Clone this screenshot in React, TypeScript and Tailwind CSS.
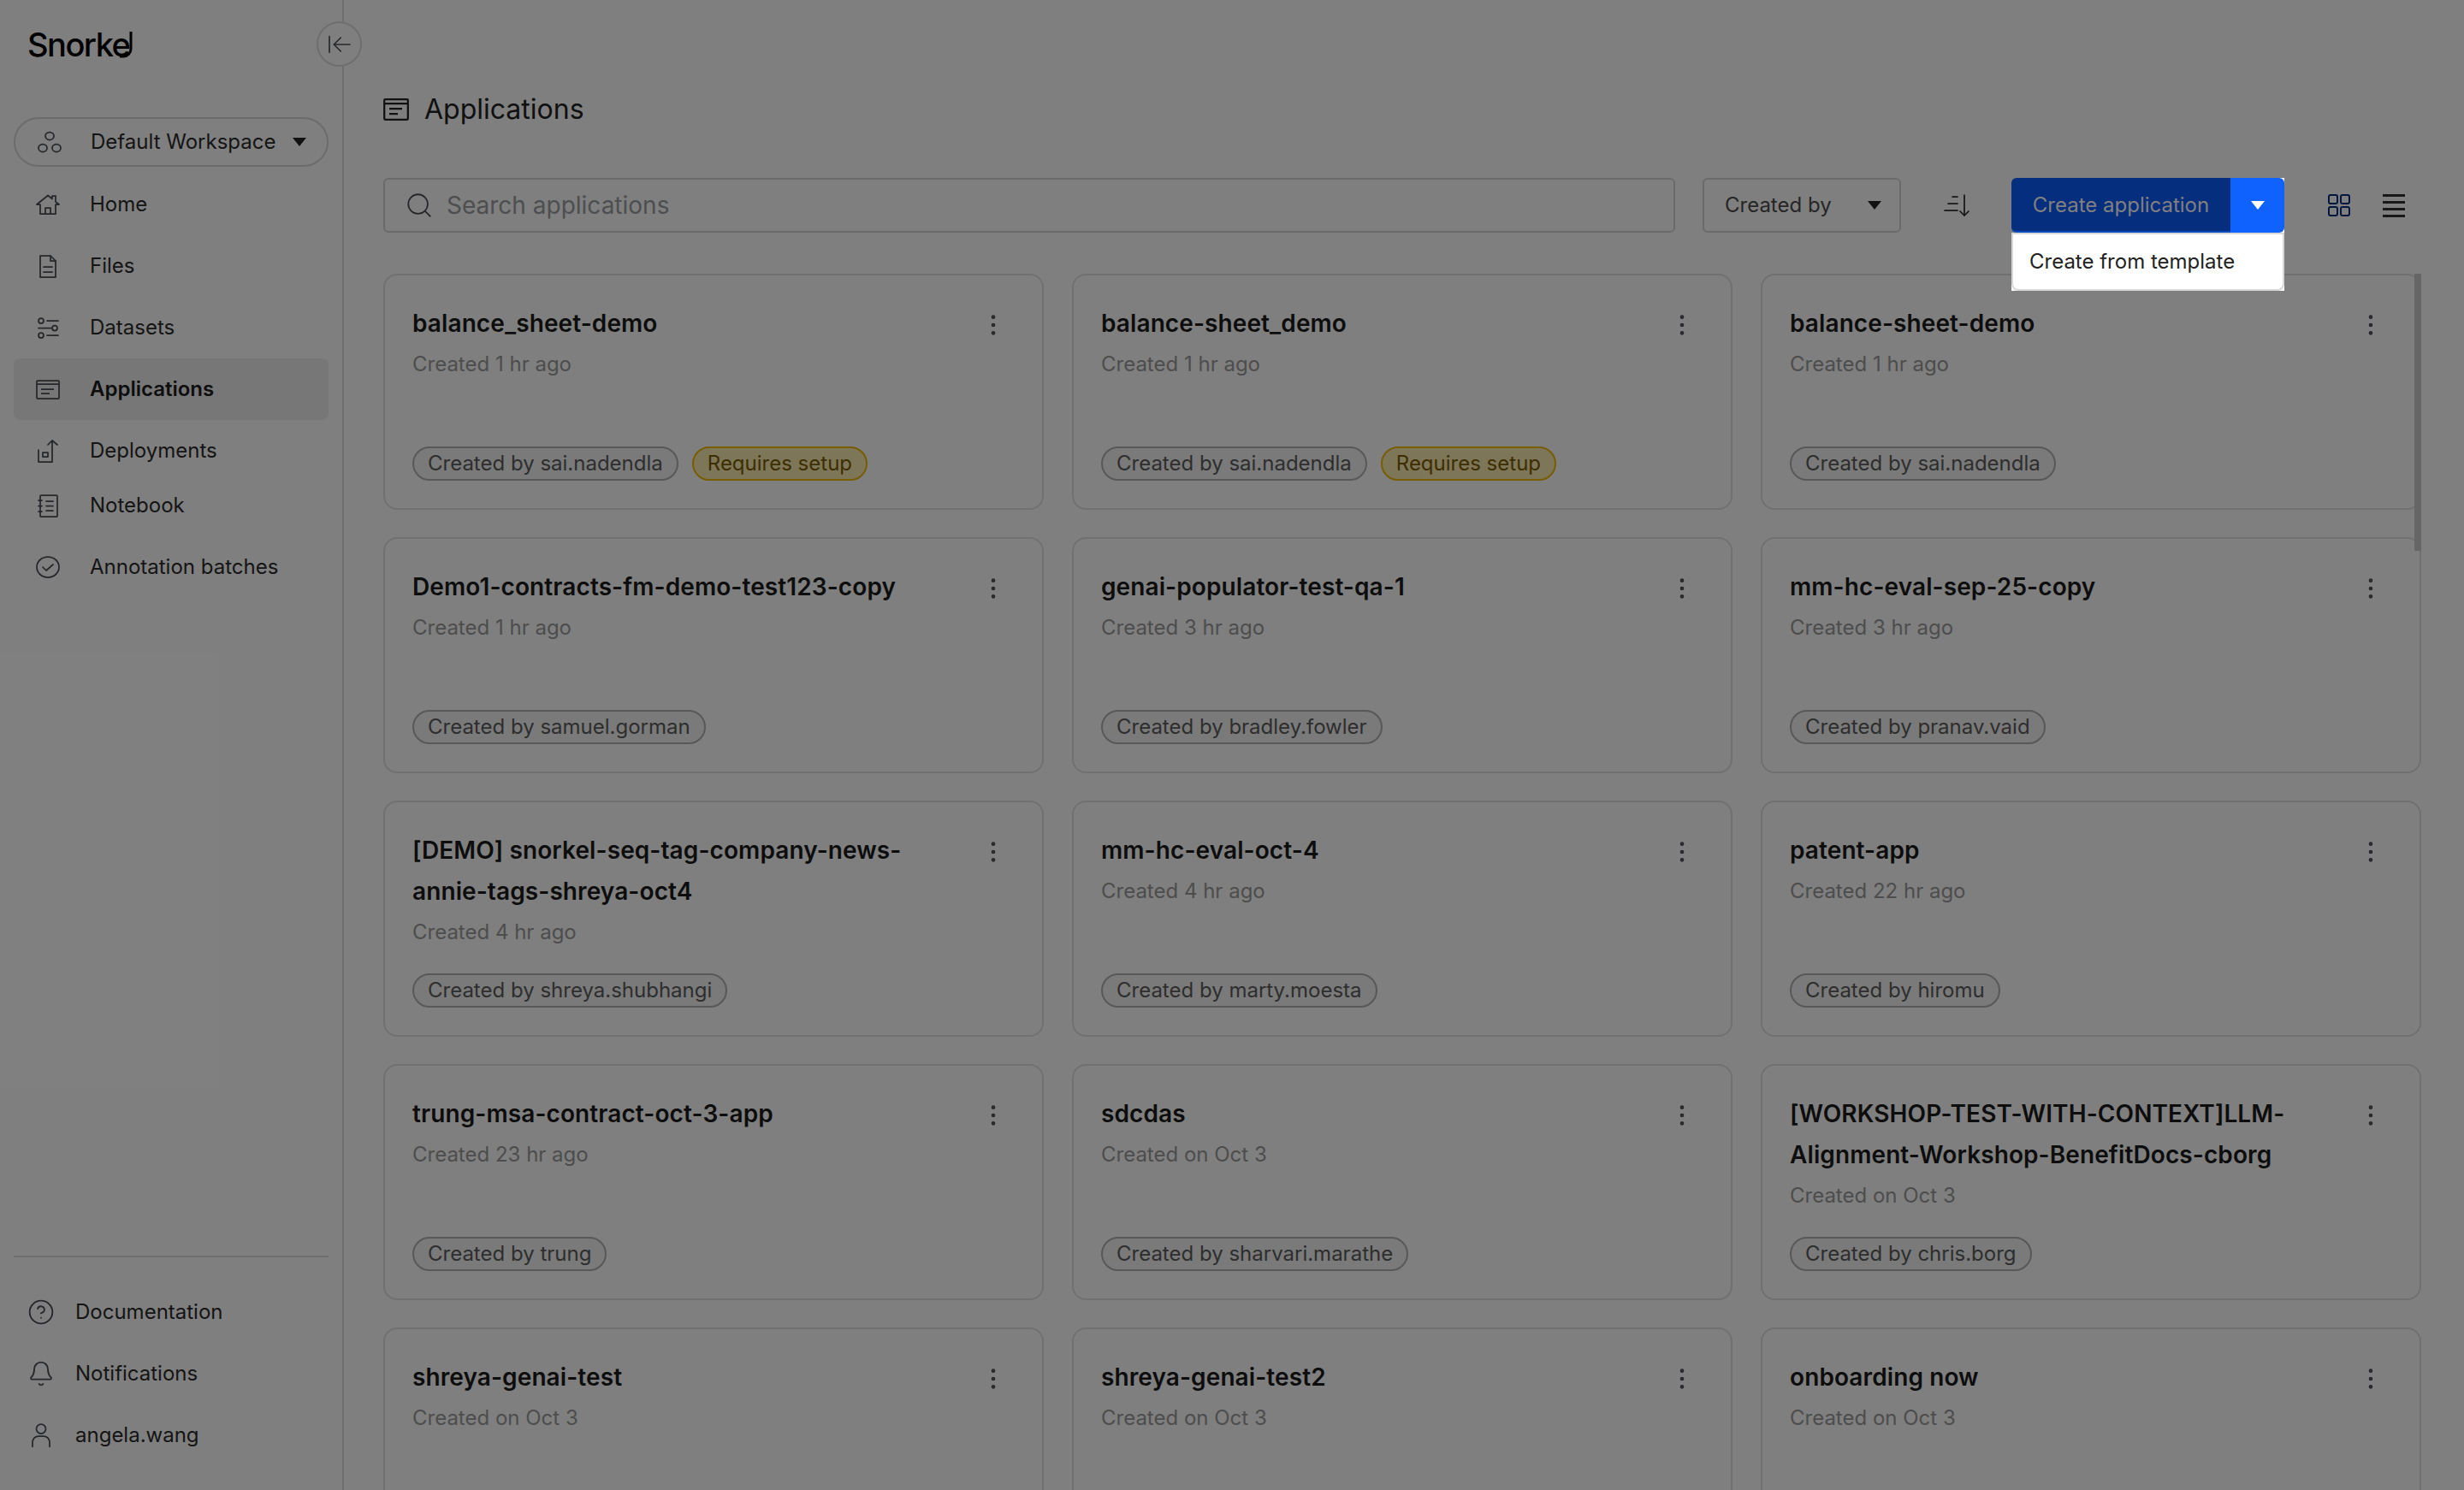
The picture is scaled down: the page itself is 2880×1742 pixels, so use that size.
import React from 'react';
import { ArrowLeftToLine, Bell, CircleHelp, MoreVertical, Search } from 'lucide-react';

type Card = { name: string; created: string; by?: string; setup?: boolean };

const CARDS: Card[] = [
  { name: 'balance_sheet-demo', created: 'Created 1 hr ago', by: 'sai.nadendla', setup: true },
  { name: 'balance-sheet_demo', created: 'Created 1 hr ago', by: 'sai.nadendla', setup: true },
  { name: 'balance-sheet-demo', created: 'Created 1 hr ago', by: 'sai.nadendla' },
  { name: 'Demo1-contracts-fm-demo-test123-copy', created: 'Created 1 hr ago', by: 'samuel.gorman' },
  { name: 'genai-populator-test-qa-1', created: 'Created 3 hr ago', by: 'bradley.fowler' },
  { name: 'mm-hc-eval-sep-25-copy', created: 'Created 3 hr ago', by: 'pranav.vaid' },
  { name: '[DEMO] snorkel-seq-tag-company-news-annie-tags-shreya-oct4', created: 'Created 4 hr ago', by: 'shreya.shubhangi' },
  { name: 'mm-hc-eval-oct-4', created: 'Created 4 hr ago', by: 'marty.moesta' },
  { name: 'patent-app', created: 'Created 22 hr ago', by: 'hiromu' },
  { name: 'trung-msa-contract-oct-3-app', created: 'Created 23 hr ago', by: 'trung' },
  { name: 'sdcdas', created: 'Created on Oct 3', by: 'sharvari.marathe' },
  { name: '[WORKSHOP-TEST-WITH-CONTEXT]LLM-Alignment-Workshop-BenefitDocs-cborg', created: 'Created on Oct 3', by: 'chris.borg' },
  { name: 'shreya-genai-test', created: 'Created on Oct 3' },
  { name: 'shreya-genai-test2', created: 'Created on Oct 3' },
  { name: 'onboarding now', created: 'Created on Oct 3' },
];

const iconProps = {
  fill: 'none',
  stroke: 'currentColor',
  strokeWidth: 1.75,
  strokeLinecap: 'round' as const,
  strokeLinejoin: 'round' as const,
};

const AppIcon = () => (
  <svg viewBox="0 0 28 23" className="w-7 h-[23px]" {...iconProps} strokeLinecap="butt" strokeLinejoin="miter">
    <rect x="1" y="1" width="26" height="21" rx="1" />
    <path d="M1 5h26M6 11h15M6 16h10" />
  </svg>
);

const TitleIcon = () => (
  <svg viewBox="0 0 30 26" className="w-[30px] h-[26px] mr-[18px]" fill="none" stroke="currentColor" strokeWidth="2.25">
    <rect x="1.2" y="1.2" width="27.6" height="23.6" rx="1" />
    <path d="M1 6h28M7 12h15M7 18h10" />
  </svg>
);

const WorkspaceIcon = () => (
  <svg viewBox="0 0 28 26" className="w-7 h-[26px]" {...iconProps}>
    <ellipse cx="14" cy="6" rx="5" ry="4.5" />
    <ellipse cx="6" cy="20" rx="5" ry="4.5" />
    <ellipse cx="22" cy="20" rx="5" ry="4.5" />
  </svg>
);

const HomeIcon = () => (
  <svg viewBox="0 0 28 24" className="w-7 h-6" {...iconProps}>
    <path d="M1 12 14 1.5l5 4V2h4v7l4 3h-4v11H5V12H1Z" />
    <path d="M11 23v-7h6v7" />
  </svg>
);

const FileIcon = () => (
  <svg viewBox="0 0 20 27" className="w-5 h-[27px]" {...iconProps}>
    <path d="M1 1h12l6 6v19H1V1Z" />
    <path d="M13 1v6h6M5 14h10M5 20h10" />
  </svg>
);

const DatasetIcon = () => (
  <svg viewBox="0 0 25 25" className="w-[25px] h-[25px]" {...iconProps}>
    <circle cx="4" cy="4" r="3" />
    <path d="M11 4h13" />
    <circle cx="20" cy="12.5" r="3" />
    <path d="M1 12.5h15" />
    <circle cx="4" cy="21" r="3" />
    <path d="M11 21h13" />
  </svg>
);

const DeployIcon = () => (
  <svg viewBox="0 0 24 27" className="w-6 h-[27px]" {...iconProps}>
    <path d="M1 12v14h16V2" />
    <path d="m12 6 5-5 6 5" />
    <rect x="6" y="15" width="6" height="5" />
  </svg>
);

const NotebookIcon = () => (
  <svg viewBox="0 0 24 27" className="w-6 h-[27px]" {...iconProps}>
    <rect x="3" y="1" width="20" height="25" rx="1" />
    <path d="M1 7h4M1 13.5h4M1 20h4M10 8h8M10 13.5h8M10 19h8" />
  </svg>
);

const BatchIcon = () => (
  <svg viewBox="0 0 28 26" className="w-7 h-[26px]" {...iconProps}>
    <ellipse cx="14" cy="13" rx="13" ry="12" />
    <path d="m8 13 4 4 8-7" />
  </svg>
);

const UserIcon = () => (
  <svg viewBox="0 0 22 28" className="w-[22px] h-7" {...iconProps} strokeLinecap="butt">
    <circle cx="11" cy="6.5" r="5.5" />
    <path d="M1 28v-6a7 7 0 0 1 7-7h6a7 7 0 0 1 7 7v6" />
  </svg>
);

const Caret = ({ className }: { className: string }) => (
  <span className={`w-0 h-0 border-x-8 border-x-transparent border-t-[10px] ${className}`} />
);

const NavItem = ({
  icon,
  label,
  active,
  height = 'h-[72px]',
}: {
  icon: React.ReactNode;
  label: string;
  active?: boolean;
  height?: string;
}) => (
  <div className={`flex items-center rounded-lg ${height} ${active ? 'bg-[#eeeeee] font-semibold text-[#1c1c1c]' : 'text-[#2b2b2b]'}`}>
    <div className="w-[80px] mr-[9px] flex justify-center text-[#4a4f55]">{icon}</div>
    <span className="text-[24px] leading-none">{label}</span>
  </div>
);

const FooterItem = ({ icon, label }: { icon: React.ReactNode; label: string }) => (
  <div className="flex items-center h-[72px] text-[#2b2b2b]">
    <div className="w-[64px] mr-2 flex justify-center text-[#4a4f55]">{icon}</div>
    <span className="text-[24px] leading-none">{label}</span>
  </div>
);

const Sidebar = () => (
  <aside className="relative w-[402px] shrink-0 h-full border-r-2 border-[#dcdcdc] flex flex-col px-4">
    <div className="relative h-[137px] pt-[32px] pl-[16px]">
      <div className="text-[38px] leading-[40px] tracking-[-1.5px] font-medium text-black">Snorke</div>
      <svg viewBox="0 0 20 32" className="absolute left-[120px] top-[36px] w-5 h-8 text-black" fill="none" stroke="currentColor" strokeWidth="3">
        <path d="M17 1v20a9 9 0 0 1-9 9H4" />
      </svg>
    </div>
    <button className="absolute left-[370px] top-[25px] w-[53px] h-[53px] rounded-full border-2 border-[#dcdcdc] bg-white flex items-center justify-center text-[#4a4f55]">
      <ArrowLeftToLine className="w-8 h-8" strokeWidth={1.25} />
    </button>

    <div className="h-[58px] rounded-full border-2 border-[#d8d8d8] flex items-center text-[#2b2b2b] pl-[26px] pr-[24px] mb-2">
      <div className="text-[#4a4f55] w-[62px]"><WorkspaceIcon /></div>
      <span className="text-[24px] leading-none flex-1">Default Workspace</span>
      <Caret className="border-t-[#222222]" />
    </div>

    <NavItem icon={<HomeIcon />} label="Home" />
    <NavItem icon={<FileIcon />} label="Files" />
    <NavItem icon={<DatasetIcon />} label="Datasets" />
    <NavItem icon={<AppIcon />} label="Applications" active />
    <NavItem icon={<DeployIcon />} label="Deployments" />
    <NavItem icon={<NotebookIcon />} label="Notebook" height="h-14" />
    <NavItem icon={<BatchIcon />} label="Annotation batches" height="h-[72px] mt-2" />

    <div className="mt-auto pb-7">
      <div className="border-t-2 border-[#dcdcdc] mb-7" />
      <FooterItem icon={<CircleHelp className="w-8 h-8" strokeWidth={1.4} />} label="Documentation" />
      <FooterItem icon={<Bell className="w-8 h-8" strokeWidth={1.4} />} label="Notifications" />
      <FooterItem icon={<UserIcon />} label="angela.wang" />
    </div>
  </aside>
);

const Toolbar = () => (
  <div className="flex items-center h-16">
    <div className="w-[1510px] h-16 rounded-md border-2 border-[#d0d4d8] flex items-center pl-[23px] text-[#9a9ca0] mr-8">
      <Search className="w-[34px] h-[34px] text-[#4a4f55] mr-[15px]" strokeWidth={1.25} />
      <span className="text-[28px] leading-none">Search applications</span>
    </div>
    <div className="w-[232px] h-16 rounded-md border-2 border-[#d0d4d8] flex items-center justify-between pl-[24px] pr-[21px] text-[#4d4d4d] mr-[50px]">
      <span className="text-[24px] leading-none">Created by</span>
      <Caret className="border-t-[#222222]" />
    </div>
    <svg viewBox="0 0 30 28" className="w-[30px] h-7 text-[#2c3034] mr-[49px]" {...iconProps}>
      <path d="M10 4h6M5 12h11M1 20h15M24 2v24M19 21l5 5 5-5" />
    </svg>
    <div className="relative z-20 w-[319px] h-16 flex">
      <div className="w-[256px] h-16 bg-[#062e7e] border-b-2 border-[#0b4cc0] pt-[2px] rounded-l-md flex items-center justify-center text-[#808080] text-[24px] leading-none">
        Create application
      </div>
      <div className="w-[63px] h-16 bg-white">
        <div className="w-full h-full bg-[#0f62fe] rounded-r-md flex items-center justify-center">
          <Caret className="border-t-white" />
        </div>
      </div>
      <div className="absolute left-0 top-16 w-[319px] h-[68px] bg-white">
        <div className="h-full border-2 border-[#d8d8d8] rounded-b-lg flex items-center pl-[19px] text-[24px] leading-none text-[#222222]">
          Create from template
        </div>
      </div>
    </div>
    <div className="ml-[51px] grid grid-cols-2 gap-[2px] text-[#062e7e]">
      {[0, 1, 2, 3].map(i => (
        <span key={i} className="w-3 h-3 rounded-[3px] border-2 border-current" />
      ))}
    </div>
    <div className="ml-[38px] w-[26px] flex flex-col gap-[5px]">
      {[0, 1, 2, 3].map(i => (
        <span key={i} className="h-[3px] bg-[#2c3034]" />
      ))}
    </div>
  </div>
);

const ProjectCard = ({ card }: { card: Card }) => (
  <div className="relative h-[276px] rounded-2xl border-2 border-[#e0e0e0] pl-8 pr-8 pt-8 pb-8 flex flex-col">
    <div className="pr-[80px] text-[28px] leading-[48px] tracking-[0.1px] font-semibold text-[#1a1a1a] break-words">{card.name}</div>
    <div className="text-[24px] leading-[48px] text-[#9a9a9a]">{card.created}</div>
    {card.by && (
      <div className="mt-auto flex gap-4">
        <span className="h-10 rounded-full border-2 border-[#b0b0b0] bg-[#f4f4f4] px-4 flex items-center text-[24px] leading-none text-[#5c5c5c]">
          Created by {card.by}
        </span>
        {card.setup && (
          <span className="h-10 rounded-full border-2 border-[#f0b800] bg-[#fbedb0] px-4 flex items-center text-[24px] leading-none text-[#7a5c00]">
            Requires setup
          </span>
        )}
      </div>
    )}
    <MoreVertical className="absolute right-[41px] top-[42px] w-8 h-8 text-[#4a4f55]" strokeWidth={1.5} />
  </div>
);

const App: React.FC = () => {
  return (
    <div className="relative w-[2880px] h-[1742px] overflow-hidden bg-white flex font-['Inter',sans-serif]">
      <Sidebar />
      <main className="relative flex-1 min-w-0 h-full pl-[46px] pr-[50px]">
        <div className="h-[208px] pt-[106px]">
          <div className="flex items-center h-11 text-[#222222]">
            <TitleIcon />
            <span className="text-[32px] leading-none">Applications</span>
          </div>
        </div>
        <Toolbar />
        <div className="mt-[48px] grid grid-cols-3 gap-x-[33px] gap-y-8">
          {CARDS.map(card => (
            <ProjectCard key={card.name} card={card} />
          ))}
        </div>
        <div className="absolute left-[2420px] top-[320px] w-2 h-[324px] bg-[#cccccc]" />
      </main>
      <div className="absolute inset-0 z-10 bg-black/50" />
    </div>
  );
};

export default App;
